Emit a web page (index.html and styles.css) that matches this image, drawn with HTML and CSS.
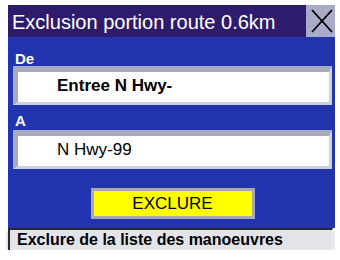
FILE: index.html
```html
<!DOCTYPE html>
<html>
<head>
<meta charset="utf-8">
<link rel="stylesheet" href="styles.css">
</head>
<body>
<div class="screen">
  <div class="titlebar">
    <div class="title">Exclusion portion route 0.6km</div>
    <div class="close">
      <svg width="29" height="32" viewBox="0 0 29 32">
        <line x1="6" y1="5" x2="26" y2="27" stroke="#000" stroke-width="1.8"/>
        <line x1="26" y1="5" x2="6" y2="27" stroke="#000" stroke-width="1.8"/>
      </svg>
    </div>
  </div>
  <div class="panel">
    <div class="label">De</div>
    <div class="field bold">Entree N Hwy-</div>
    <div class="label second">A</div>
    <div class="field field2">N Hwy-99</div>
    <div class="btnrow">
      <div class="button">EXCLURE</div>
    </div>
  </div>
  <div class="status">Exclure de la liste des manoeuvres</div>
</div>
</body>
</html>
```
FILE: styles.css
```css
html, body {
  margin: 0;
  padding: 0;
  background: #ffffff;
}
body {
  font-family: "Liberation Sans", Arial, sans-serif;
}
.screen {
  margin: 5px 0 0 8px;
  width: 327px;
}
.titlebar {
  display: flex;
  height: 32px;
  background: #2e1b6b;
}
.title {
  flex: 1;
  color: #ffffff;
  font-size: 20px;
  line-height: 29px;
  padding: 3px 0 0 4px;
  white-space: nowrap;
}
.close {
  width: 29px;
  height: 32px;
  background: #a9acc9;
}
.close svg {
  display: block;
}
.panel {
  background: #2234b0;
  padding: 14px 3px 9px 5px;
}
.label {
  color: #ffffff;
  font-weight: bold;
  font-size: 15px;
  line-height: 15px;
  padding-left: 2px;
}
.label.second {
  margin-top: 8px;
}
.field {
  box-sizing: border-box;
  height: 39px;
  background: #ffffff;
  border-top: 6px solid #a7abbf;
  border-left: 5px solid #a7abbf;
  border-bottom: 3px solid #cdd0de;
  border-right: 3px solid #cdd0de;
  padding-left: 39px;
  font-size: 17px;
  line-height: 28px;
  color: #000000;
  white-space: nowrap;
}
.field.bold {
  font-weight: bold;
}
.field2 {
  margin-top: 2px;
}
.btnrow {
  display: flex;
  justify-content: center;
  margin-top: 19px;
}
.button {
  box-sizing: border-box;
  width: 164px;
  height: 31px;
  background: #ffff00;
  border: 3px solid #a9a9b4;
  text-align: center;
  font-size: 17px;
  line-height: 25px;
  color: #000000;
}
.status {
  box-sizing: border-box;
  height: 22px;
  width: 325px;
  background: #e3e3ea;
  border-top: 2px solid #2a2a2a;
  border-left: 2px solid #2a2a2a;
  border-right: 1px solid #f4f4f8;
  padding-left: 7px;
  font-weight: bold;
  font-size: 16px;
  line-height: 19px;
  color: #000000;
  white-space: nowrap;
  box-shadow: 0 3px 3px rgba(0, 0, 0, 0.3);
}
```
